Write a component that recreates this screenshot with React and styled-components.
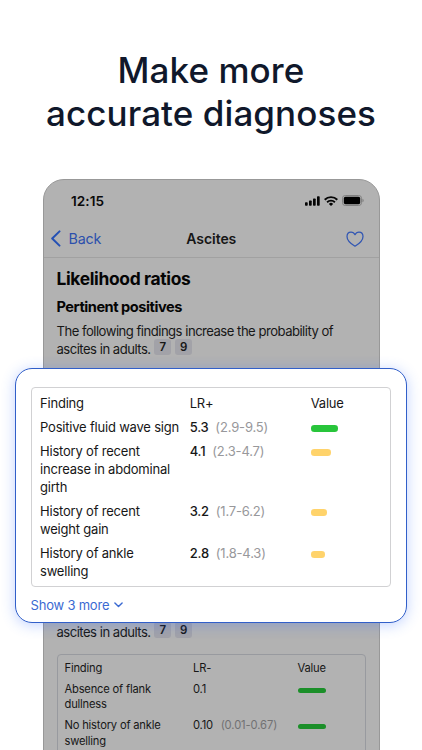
import React from "react";
import styled, { createGlobalStyle } from "styled-components";

const GlobalStyle = createGlobalStyle`
  * { box-sizing: border-box; }
  html, body { margin: 0; background: #fff; overflow: hidden; }
  body { font-family: Inter, "Liberation Sans", sans-serif; color: #111; }
`;

const Page = styled.main`
  position: relative;
  width: 422px;
  height: 750px;
  overflow: hidden;
  background: #fff;
`;

const Headline = styled.h1`
  margin: 0;
  height: 179px;
  padding-top: 49px;
  text-align: center;
  font-size: 35px;
  line-height: 43.3px;
  font-weight: 500;
  letter-spacing: 0.08px;
  color: #10182b;
`;

const Phone = styled.section`
  width: 337px;
  height: 600px;
  margin-left: 42.5px;
  border: 1px solid #989898;
  border-radius: 21px 21px 0 0;
  background: #b2b2b2;
`;

const StatusBar = styled.div`
  display: flex;
  align-items: center;
  justify-content: space-between;
  height: 42px;
  padding: 0 15px 0 27.5px;
`;

const Time = styled.span`
  font-size: 13.6px;
  font-weight: 600;
  letter-spacing: 0.05px;
  color: #0a0a0a;
`;

const StatusIcons = styled.div`
  display: flex;
  align-items: center;
  gap: 4px;
  padding-bottom: 1px;
`;

const NavBar = styled.header`
  display: grid;
  grid-template-columns: 1fr auto 1fr;
  align-items: center;
  height: 36px;
  padding: 0 14.5px 2px 6px;
  border-bottom: 1px solid #a1a1a1;
`;

const BackLink = styled.a`
  display: flex;
  align-items: center;
  gap: 8px;
  font-size: 14.3px;
  letter-spacing: -0.2px;
  color: #2c50ac;
`;

const NavTitle = styled.span`
  padding-left: 9px;
  font-size: 14px;
  font-weight: 600;
  letter-spacing: -0.05px;
  color: #161616;
`;

const NavAction = styled.div`
  display: flex;
  justify-content: flex-end;
`;

const Article = styled.div`
  padding: 9px 13px 0;
`;

const Title = styled.h2`
  margin: 0;
  font-size: 17.4px;
  line-height: 24px;
  font-weight: 700;
  letter-spacing: -0.34px;
  color: #050505;
`;

const Subtitle = styled.h3`
  margin: 6px 0 0;
  font-size: 14.6px;
  line-height: 20px;
  font-weight: 700;
  letter-spacing: -0.46px;
  color: #050505;
`;

const Paragraph = styled.p`
  margin: ${(p) => p.$top}px 0 0;
  font-size: 13.1px;
  line-height: 17.5px;
  letter-spacing: -0.52px;
  word-spacing: 0.1px;
  white-space: nowrap;
  color: #171717;
`;

const Reference = styled.span`
  display: inline-block;
  width: 17px;
  height: 16px;
  margin: -4px 0 -4px 3.8px;
  border-radius: 3px;
  background: #a2a2a8;
  font-size: 11.5px;
  line-height: 16px;
  font-weight: 600;
  letter-spacing: 0;
  text-align: center;
  vertical-align: 2.5px;
`;

const Table = styled.div`
  display: grid;
  align-items: start;
  align-content: start;
  ${(p) =>
    p.$compact
      ? `
    grid-template-columns: 128.5px 104.5px 1fr;
    row-gap: 5.2px;
    width: 309px;
    height: 110px;
    margin-top: 13px;
    padding: 6px 7px;
    border: 1px solid #989a9f;
    font-size: 11.2px;
    line-height: 15.6px;
    letter-spacing: -0.2px;
  `
      : `
    grid-template-columns: 149.7px 121px 1fr;
    row-gap: 6px;
    padding: 6px 8.5px;
    border: 1px solid #d1d1d3;
    font-size: 13px;
    line-height: 18px;
    letter-spacing: -0.2px;
  `}
  border-radius: 4px;
`;

const Cell = styled.span`
  white-space: pre-line;
  font-weight: ${(p) => (p.$strong ? 500 : 400)};
  color: #171717;
`;

const Range = styled.span`
  margin-left: ${(p) => (p.$compact ? 7.8 : 6.8)}px;
  font-weight: 400;
  letter-spacing: ${(p) => (p.$compact ? -0.1 : -0.17)}px;
  color: ${(p) => (p.$compact ? "#717173" : "#98989b")};
`;

const Bar = styled.span`
  height: ${(p) => (p.$compact ? 5.3 : 6.5)}px;
  width: ${(p) => p.$width}px;
  margin-top: ${(p) => (p.$compact ? 6 : 7.6)}px;
  border-radius: 3.3px;
  background: ${(p) => p.$color};
`;

const Callout = styled.section`
  position: absolute;
  top: 367.5px;
  left: 15px;
  width: 392px;
  height: 255.5px;
  padding: 18px 15.5px 0 14.5px;
  border: 1.5px solid #315fc9;
  border-radius: 17px;
  background: #fff;
  box-shadow: 0 2px 14px rgba(49, 105, 255, 0.3);
`;

const ShowMore = styled.div`
  display: flex;
  align-items: center;
  gap: 5px;
  height: 18px;
  margin-top: 9px;
  font-size: 13px;
  letter-spacing: -0.2px;
  color: #3b6ad2;
`;

const positives = [
  { finding: "Positive fluid wave sign", ratio: "5.3", range: "(2.9-9.5)", width: 27, color: "#28c53b" },
  { finding: "History of recent\nincrease in abdominal\ngirth", ratio: "4.1", range: "(2.3-4.7)", width: 20, color: "#ffd36b" },
  { finding: "History of recent\nweight gain", ratio: "3.2", range: "(1.7-6.2)", width: 16, color: "#ffd36b" },
  { finding: "History of ankle\nswelling", ratio: "2.8", range: "(1.8-4.3)", width: 14, color: "#ffd36b" },
];

const negatives = [
  { finding: "Absence of flank\ndullness", ratio: "0.1", width: 28.5, color: "#1b8f29" },
  { finding: "No history of ankle\nswelling", ratio: "0.10", range: "(0.01-0.67)", width: 28.5, color: "#1b8f29" },
];

function RatioTable({ rows, label, compact }) {
  return (
    <Table $compact={compact}>
      <Cell>Finding</Cell>
      <Cell>{label}</Cell>
      <Cell>Value</Cell>
      {rows.map((row) => (
        <React.Fragment key={row.finding}>
          <Cell>{row.finding}</Cell>
          <Cell $strong={!compact}>
            {row.ratio}
            {row.range && <Range $compact={compact}>{row.range}</Range>}
          </Cell>
          <Bar $compact={compact} $width={row.width} $color={row.color} />
        </React.Fragment>
      ))}
    </Table>
  );
}

function SignalIcon() {
  return (
    <svg width="15" height="10" viewBox="0 0 15 10" fill="#050505">
      <rect x="0" y="6.3" width="2.7" height="3.4" rx="0.7" />
      <rect x="4" y="4.5" width="2.7" height="5.2" rx="0.7" />
      <rect x="8" y="2.5" width="2.7" height="7.2" rx="0.7" />
      <rect x="12" y="0.2" width="2.7" height="9.5" rx="0.7" />
    </svg>
  );
}

function WifiIcon() {
  return (
    <svg width="14" height="10" viewBox="0 0 14 10" fill="none" stroke="#050505" strokeWidth="1.9">
      <path d="M.7 3.700a9 9 0 0 1 12.600 0" />
      <path d="M3.100 6.200a5.600 5.600 0 0 1 7.800 0" />
      <path d="M7 10 4.900 7.900a3 3 0 0 1 4.200 0Z" fill="#050505" stroke="none" />
    </svg>
  );
}

function BatteryIcon() {
  return (
    <svg width="22" height="11" viewBox="0 0 22 11">
      <rect x="0.5" y="0.5" width="19" height="10" rx="2.8" fill="none" stroke="#808080" />
      <rect x="1.8" y="1.8" width="16.4" height="7.4" rx="1.6" fill="#000" />
      <path d="M20.5 3.8v3.4c.8-.3 1.1-1 1.1-1.7s-.3-1.4-1.1-1.7Z" fill="#777" />
    </svg>
  );
}

function BackIcon() {
  return (
    <svg width="11" height="17" viewBox="0 0 11 17" fill="none" stroke="#2450b4" strokeWidth="2" strokeLinecap="round" strokeLinejoin="round">
      <path d="M9.500 1.400 2.200 8.500l7.300 7.100" />
    </svg>
  );
}

function HeartIcon() {
  return (
    <svg width="18" height="16" viewBox="0 0 18 16" fill="none" stroke="#3156b3" strokeWidth="1.25" strokeLinejoin="round">
      <path d="M9 15.200C6.200 13.600 1 9.800 1 5.500 1 2.900 2.700 1 5 1c1.800 0 3.200 1 4 2.700C9.800 2 11.200 1 13 1c2.300 0 4 1.900 4 4.500 0 4.300-5.200 8.100-8 9.700Z" />
    </svg>
  );
}

function ChevronIcon() {
  return (
    <svg width="9" height="6" viewBox="0 0 9 6" fill="none" stroke="#3b6ad2" strokeWidth="1.4" strokeLinecap="round" strokeLinejoin="round">
      <path d="m.9 1 3.600 3.600L8.100 1" />
    </svg>
  );
}

function References() {
  return (
    <>
      <Reference>7</Reference>
      <Reference>9</Reference>
    </>
  );
}

export default function App() {
  return (
    <Page>
      <GlobalStyle />
      <Headline>
        Make more
        <br />
        accurate diagnoses
      </Headline>
      <Phone>
        <StatusBar>
          <Time>12:15</Time>
          <StatusIcons>
            <SignalIcon />
            <WifiIcon />
            <BatteryIcon />
          </StatusIcons>
        </StatusBar>
        <NavBar>
          <BackLink>
            <BackIcon />
            Back
          </BackLink>
          <NavTitle>Ascites</NavTitle>
          <NavAction>
            <HeartIcon />
          </NavAction>
        </NavBar>
        <Article>
          <Title>Likelihood ratios</Title>
          <Subtitle>Pertinent positives</Subtitle>
          <Paragraph $top={6}>
            The following findings increase the probability of
            <br />
            ascites in adults.
            <References />
          </Paragraph>
          <Paragraph $top={265.5}>
            ascites in adults.
            <References />
          </Paragraph>
          <RatioTable rows={negatives} label="LR-" compact />
        </Article>
      </Phone>
      <Callout>
        <RatioTable rows={positives} label="LR+" />
        <ShowMore>
          Show 3 more
          <ChevronIcon />
        </ShowMore>
      </Callout>
    </Page>
  );
}
